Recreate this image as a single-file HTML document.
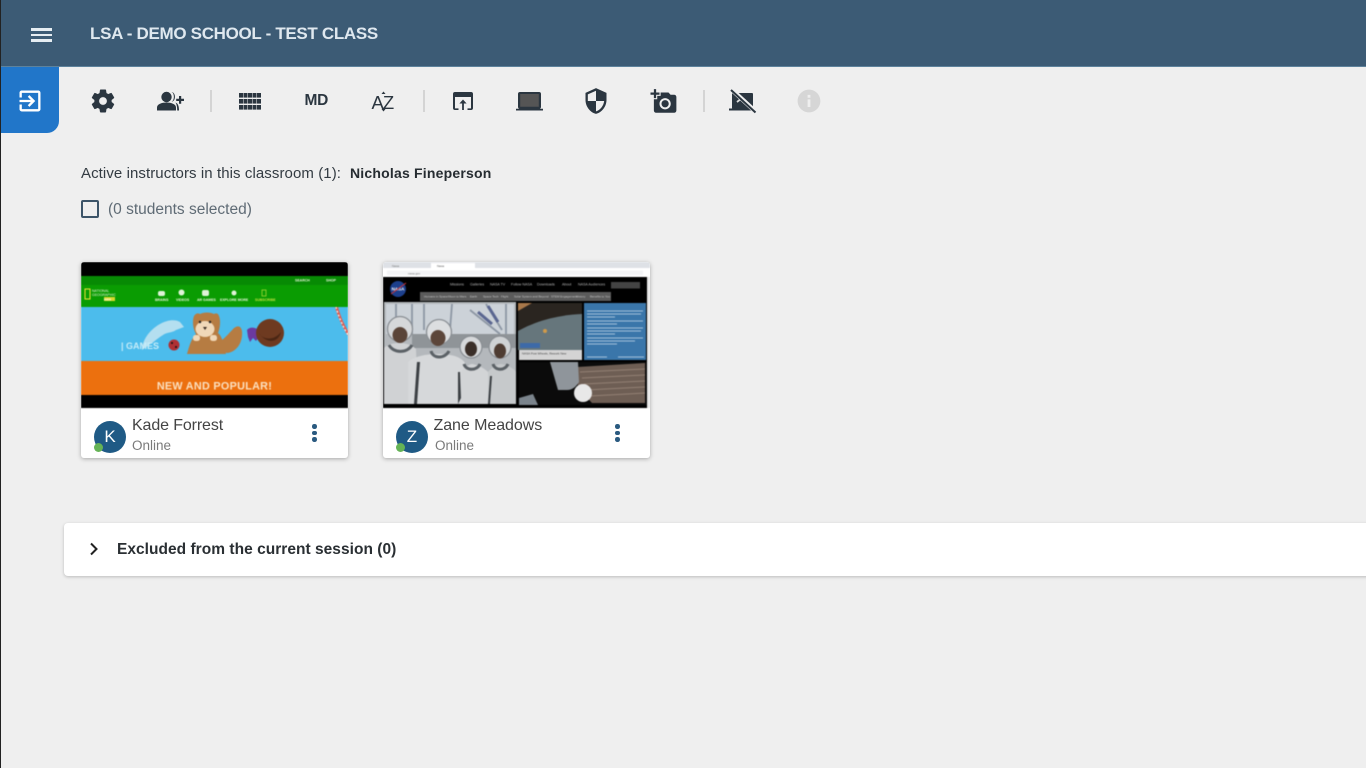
<!DOCTYPE html>
<html lang="en"><head><meta charset="utf-8"><title>LSA - Demo School</title>
<style>
*{box-sizing:border-box}
html,body{margin:0;padding:0;width:1366px;height:768px;overflow:hidden;background:#efefef;font-family:"Liberation Sans",sans-serif}
#w{position:absolute;left:0;top:0;width:1366px;height:768px;overflow:hidden;filter:blur(.35px)}
.a{position:absolute}
.t{position:absolute;white-space:nowrap;line-height:1}
#hdr{left:0;top:0;width:1366px;height:67px;background:#3c5b75;border-bottom:1px solid #5d829c}
.sep{position:absolute;width:2px;height:22px;top:90px;background:#d4d4d4}
.ic{position:absolute;fill:#2b3640}
.card{position:absolute;top:262px;width:267px;height:196px;background:#fff;border-radius:3px;box-shadow:0 1px 4px rgba(0,0,0,.3);overflow:hidden}
.th{position:absolute;left:0;top:0;filter:blur(.5px)}
.av{position:absolute;top:421px;width:32px;height:32px;border-radius:50%;background:#1f5a85;color:#fff;font-size:17px;line-height:31px;text-align:center}
.dot{position:absolute;top:443px;width:9px;height:9px;border-radius:50%;background:#65b356;}
.k{position:absolute;width:4.5px;height:4.5px;border-radius:50%;background:#2a5a80}
</style></head><body><div id="w">
<div class="a" style="left:0;top:0;width:1px;height:768px;background:#222;z-index:5"></div>
<div class="a" id="hdr"></div>
<div class="a" style="left:31px;top:28px;width:21px;height:2.5px;background:#e6edf2"></div>
<div class="a" style="left:31px;top:33.500px;width:21px;height:2.5px;background:#e6edf2"></div>
<div class="a" style="left:31px;top:39px;width:21px;height:2.5px;background:#e6edf2"></div>
<div class="t" style="left:90px;top:25px;font-size:17px;font-weight:bold;color:#dfe8ef;letter-spacing:-.32px">LSA - DEMO SCHOOL - TEST CLASS</div>

<div class="a" style="left:1px;top:67px;width:58px;height:66px;background:#2176c9;border-radius:0 0 12px 0"></div>
<svg class="a" style="left:16px;top:87px;fill:#fff" width="28" height="28" viewBox="0 0 24 24"><path d="M10.090 15.590L11.500 17l5-5-5-5-1.410 1.410L12.670 11H3v2h9.670l-2.580 2.590zM19 3H5c-1.110 0-2 .9-2 2v4h2V5h14v14H5v-4H3v4c0 1.100.89 2 2 2h14c1.100 0 2-.9 2-2V5c0-1.100-.9-2-2-2z"/></svg>

<svg class="ic" style="left:89px;top:87px" width="28" height="28" viewBox="0 0 24 24"><path stroke="#2b3640" stroke-width=".5" d="M19.140 12.940c.04-.3.06-.61.06-.94 0-.32-.02-.64-.07-.94l2.030-1.580c.18-.14.23-.41.12-.61l-1.920-3.320c-.12-.22-.37-.29-.59-.22l-2.390.96c-.5-.38-1.030-.7-1.620-.94l-.36-2.540c-.04-.24-.24-.41-.48-.41h-3.840c-.24 0-.43.17-.47.41l-.36 2.540c-.59.24-1.130.57-1.620.94l-2.390-.96c-.22-.08-.47 0-.59.22L2.740 8.870c-.12.21-.08.47.12.61l2.030 1.580c-.05.3-.09.63-.09.94s.02.64.07.94l-2.030 1.580c-.18.14-.23.41-.12.61l1.920 3.320c.12.22.37.29.59.22l2.390-.96c.5.38 1.030.7 1.620.94l.36 2.540c.05.24.24.41.48.41h3.840c.24 0 .44-.17.47-.41l.36-2.540c.59-.24 1.130-.56 1.620-.94l2.390.96c.22.08.47 0 .59-.22l1.920-3.320c.12-.22.07-.47-.12-.61l-2.010-1.580zM12 15.600c-1.980 0-3.600-1.620-3.600-3.600s1.620-3.600 3.600-3.600 3.600 1.620 3.600 3.600-1.620 3.600-3.600 3.600z"/></svg>

<svg class="ic" style="left:156px;top:91px" width="28" height="20" viewBox="0 0 28 20"><circle cx="10.500" cy="6" r="5.200"/><path d="M1 19.500v-3c0-3.400 5-5 9.500-5s9.500 1.600 9.500 5v3z"/><path d="M15.500 1c3.200 1 3.200 8.500 0 9.800 4.600-.3 4.600-9.500 0-9.800zM19.500 11.500c2.500 1 3.500 3.500 3.500 8h-1.800c0-3.500-.4-6-1.700-8z"/><path d="M23 5h2.200v2.800H28V10h-2.800v2.800H23V10h-2.800V7.800H23z"/></svg>
<div class="sep" style="left:210px"></div>

<svg class="ic" style="left:239px;top:93px" width="22" height="17" viewBox="0 0 22 17"><g fill="#2b3640"><rect x="0" y="0" width="4" height="4.600"/><rect x="4.500" y="0" width="4" height="4.600"/><rect x="9" y="0" width="4" height="4.600"/><rect x="13.500" y="0" width="4" height="4.600"/><rect x="18" y="0" width="4" height="4.600"/><rect x="0" y="6" width="4" height="4.600"/><rect x="4.500" y="6" width="4" height="4.600"/><rect x="9" y="6" width="4" height="4.600"/><rect x="13.500" y="6" width="4" height="4.600"/><rect x="18" y="6" width="4" height="4.600"/><rect x="0" y="12" width="4" height="4.600"/><rect x="4.500" y="12" width="4" height="4.600"/><rect x="9" y="12" width="4" height="4.600"/><rect x="13.500" y="12" width="4" height="4.600"/><rect x="18" y="12" width="4" height="4.600"/></g></svg>
<div class="t" style="left:304.500px;top:93px;font-size:15.500px;font-weight:bold;color:#2b3640;letter-spacing:-.3px">MD</div>
<div class="t" style="left:371.500px;top:94px;font-size:18.500px;color:#2b3640;letter-spacing:-1px">AZ</div>
<svg class="a" style="left:378px;top:88px" width="12" height="24" viewBox="0 0 12 24"><path d="M3.500 6L5.500 3.500 7.500 6zM3.500 21L5.500 23.500 7.500 21z" fill="#2b3640"/></svg>
<div class="sep" style="left:423px"></div>

<svg class="a" style="left:453px;top:92px" width="20" height="18" viewBox="0 0 20 18"><path fill="#2b3640" d="M2 0h16a2 2 0 0 1 2 2v14a2 2 0 0 1-2 2h-3.500v-1.600H18V5H2v11.400h3.500V18H2a2 2 0 0 1-2-2V2a2 2 0 0 1 2-2z"/><path fill="#2b3640" d="M10 7.500l3.600 4h-2.700V18H9.100v-6.500H6.400z"/></svg>
<svg class="a" style="left:516px;top:90px" width="27" height="21" viewBox="0 0 27 21"><path fill="#555" d="M4 4h19v13H4z"/><path fill="#2b3640" d="M4 2h19a2 2 0 0 1 2 2v13a2 2 0 0 1-1 1.700H27V20.500H0V18.700h3A2 2 0 0 1 2 17V4a2 2 0 0 1 2-2zm.2 2v12.800h18.600V4z"/></svg>
<svg class="ic" style="left:582px;top:87px" width="28" height="28" viewBox="0 0 24 24"><path d="M12 1L3 5v6c0 5.550 3.840 10.740 9 12 5.160-1.260 9-6.450 9-12V5l-9-4zm0 10.990h7c-.53 4.120-3.280 7.790-7 8.940V12H5V6.300l7-3.110v8.800z"/></svg>
<svg class="ic" style="left:649.500px;top:88px" width="28" height="27" viewBox="0 0 24 24"><path d="M3 4V1h2v3h3v2H5v3H3V6H0V4h3zm3 6V7h3V4h7l1.830 2H21c1.100 0 2 .9 2 2v12c0 1.100-.9 2-2 2H5c-1.100 0-2-.9-2-2V10h3zm7 9c2.760 0 5-2.240 5-5s-2.240-5-5-5-5 2.240-5 5 2.240 5 5 5zm-3.200-5c0 1.770 1.430 3.200 3.200 3.200s3.200-1.430 3.200-3.200-1.430-3.200-3.200-3.200-3.200 1.430-3.200 3.200z"/></svg>
<div class="sep" style="left:703px"></div>

<svg class="a" style="left:728px;top:88px" width="29" height="26" viewBox="0 0 29 26"><rect x="4" y="5" width="21" height="16" rx="1" fill="#2b3640"/><rect x="1" y="20.500" width="26" height="2" fill="#2b3640"/><path d="M9 14l5-4 4 3" stroke="#ddd" stroke-width="1.800" fill="none"/><path d="M3 1L28 24" stroke="#efefef" stroke-width="4.500"/><path d="M3 2L27.500 24.500" stroke="#2b3640" stroke-width="2"/></svg>
<svg class="a" style="left:796px;top:88px;fill:#d6d6d6" width="26" height="26" viewBox="0 0 24 24"><path d="M12 1.500C6.200 1.500 1.500 6.200 1.500 12S6.200 22.500 12 22.500 22.500 17.800 22.500 12 17.800 1.500 12 1.500zm1.300 16h-2.600v-7h2.600v7zm0-8.500h-2.600V6.400h2.600V9z"/></svg>

<div class="t" style="left:81px;top:166px;font-size:15px;color:#333b42;letter-spacing:.08px">Active instructors in this classroom (1):</div>
<div class="t" style="left:350px;top:166px;font-size:14px;font-weight:bold;color:#262c31;letter-spacing:.2px">Nicholas Fineperson</div>
<div class="a" style="left:81px;top:200px;width:18px;height:18px;border:2px solid #3c5468;border-radius:2px"></div>
<div class="t" style="left:108px;top:202px;font-size:15.500px;color:#5f6b75;letter-spacing:0">(0 students selected)</div>

<div class="card" style="left:81px">
<svg class="th" width="267" height="146" viewBox="81 262 267 146">
<rect x="81" y="262" width="267" height="146" fill="#000"/>
<rect x="81" y="276" width="267" height="31" fill="#0a9c02"/>
<rect x="81" y="276" width="267" height="9" fill="#078a04"/>
<rect x="81" y="307" width="267" height="54" fill="#4cbcec"/>
<rect x="81" y="361" width="267" height="34" fill="#ec700e"/>
<rect x="85" y="289" width="5" height="10" fill="none" stroke="#f2e23c" stroke-width="1"/>
<rect x="104" y="297" width="11" height="4" fill="#d8d82c"/>
<text x="92" y="292" font-size="3.500" fill="#e6f4d8" font-family="Liberation Sans">NATIONAL</text>
<text x="92" y="296" font-size="3.500" fill="#e6f4d8" font-family="Liberation Sans">GEOGRAPHIC</text>
<text x="104" y="300.500" font-size="3" font-weight="bold" fill="#fff" font-family="Liberation Sans">KIDS</text>
<g fill="#dff3d8"><rect x="158" y="291" width="7" height="5" rx="2"/><circle cx="181.500" cy="292.500" r="3"/><rect x="202" y="290" width="7" height="6" rx="2"/><circle cx="234" cy="293" r="2.500"/></g>
<rect x="262" y="290" width="4" height="6" fill="none" stroke="#b8e03c" stroke-width=".7"/>
<g font-family="Liberation Sans" font-size="3.500" font-weight="bold" fill="#e6f4d8"><text x="155" y="301">BRAINS</text><text x="176" y="301">VIDEOS</text><text x="197" y="301">AR GAMES</text><text x="220" y="301">EXPLORE MORE</text><text x="255" y="301" fill="#c4e040">SUBSCRIBE</text><text x="295" y="281.500">SEARCH</text><text x="326" y="281.500">SHOP</text></g>
<path d="M335 307c2 8 7 20 13 29v-5c-4-7-8-16-10-24z" fill="#e05a50"/>
<path d="M336 307c2 8 7 20 12 28" stroke="#f2e8e0" stroke-width="1.300" stroke-dasharray="2 2" fill="none"/>
<path d="M142 350c0-9 7-20 18-26 7-4 15-5 20-2l4 5-8 3c-4 3-9 2-13 5-5 3-8 6-11 8-3 2-7 5-10 7z" fill="#b4dff0"/>
<text x="121" y="349" font-family="Liberation Sans" font-size="9" font-weight="bold" fill="#c6ecf8">| GAMES</text>
<circle cx="174" cy="345" r="5.500" fill="#b03034"/>
<circle cx="172" cy="343" r="1" fill="#111"/><circle cx="176" cy="347" r="1" fill="#111"/>
<path d="M218 352l4-12c5-4 9-9 12-12 4-3 7-2 8 3 1 10-4 20-14 22z" fill="#b67c42"/>
<path d="M187 354c2-7 4-15 9-20-3-5-4-13-2-18 2-3 4-3 6-2 4-2 10-2 14 0 2-1 4-1 5 2 2 5 1 12-1 17 5 4 6 14 8 21z" fill="#b67c42"/>
<ellipse cx="205" cy="329" rx="9.500" ry="8" fill="#f0d8b8"/>
<path d="M203 327h4l-2 3z" fill="#3a2a20"/><rect x="193" y="335" width="7" height="6" rx="2.500" fill="#f0d8b8"/><rect x="210" y="335" width="7" height="6" rx="2.500" fill="#f0d8b8"/>
<circle cx="200" cy="322" r="1.200" fill="#222"/><circle cx="210" cy="322" r="1.200" fill="#222"/>
<path d="M247 330c2-3 7-3 10-1 3 3 2 9-1 12l-3-3-3 4-2-5z" fill="#6b3aa0"/>
<circle cx="270" cy="333" r="14" fill="#6e3a20"/>
<path d="M259 333c3 6 14 9 22-1-2 10-14 13-22 1z" fill="#4a2614"/>
<text x="214.500" y="389.500" text-anchor="middle" font-family="Liberation Sans" font-size="10.800" font-weight="bold" fill="#fbe0c0" letter-spacing=".3">NEW AND POPULAR!</text>
</svg>
</div>

<div class="card" style="left:383px">
<svg class="th" width="267" height="146" viewBox="383 262 267 146">
<rect x="383" y="262" width="267" height="146" fill="#000"/>
<rect x="383" y="262" width="267" height="6" fill="#dee1e6"/>
<rect x="431" y="263" width="44" height="5" fill="#fff"/>
<rect x="383" y="268" width="267" height="9" fill="#fff"/>
<rect x="387" y="270.500" width="256" height="4.500" fill="#f3f4f6"/>
<text x="392" y="267" font-size="3" fill="#777" font-family="Liberation Sans">Nasa</text>
<text x="437" y="267" font-size="3" fill="#555" font-family="Liberation Sans">Nasa</text>
<text x="408" y="274.500" font-size="3" fill="#777" font-family="Liberation Sans">nasa.gov</text>
<rect x="647" y="277" width="3" height="131" fill="#e8e8e8"/>
<circle cx="398" cy="289" r="8" fill="#1c3f8c"/>
<text x="398" y="290.500" text-anchor="middle" font-size="4.500" font-weight="bold" fill="#fff" font-family="Liberation Sans">NASA</text>
<path d="M391 294L406 283" stroke="#c33" stroke-width="1"/>
<g font-family="Liberation Sans" font-size="3.600" fill="#b4b4b4"><text x="450" y="285.500">Missions</text><text x="470" y="285.500">Galleries</text><text x="490" y="285.500">NASA TV</text><text x="511" y="285.500">Follow NASA</text><text x="537" y="285.500">Downloads</text><text x="562" y="285.500">About</text><text x="578" y="285.500">NASA Audiences</text></g>
<rect x="611" y="282" width="29" height="6.500" fill="#444"/>
<rect x="420" y="292" width="191" height="9" fill="#5b5b5b"/>
<g font-family="Liberation Sans" font-size="3" fill="#c4c4c4"><text x="424" y="297.500">Humans in Space</text><text x="448" y="297.500">Moon to Mars</text><text x="470" y="297.500">Earth</text><text x="483" y="297.500">Space Tech</text><text x="501" y="297.500">Flight</text><text x="514" y="297.500">Solar System and Beyond</text><text x="551" y="297.500">STEM Engagement</text><text x="576" y="297.500">History</text><text x="590" y="297.500">Benefits to You</text></g>

<rect x="384" y="302" width="132" height="102" fill="#b4b8bc"/>
<rect x="386" y="304" width="128" height="30" fill="#ccd2d8"/>
<path d="M396 304v24M412 304v30M424 304v26M452 304l-2 26M470 310l30 24M486 304l16 26M506 304v32" stroke="#8d97a4" stroke-width="1.800" fill="none"/>
<path d="M478 312l14 12M488 306l10 16" stroke="#5a6690" stroke-width="3" fill="none"/>
<path d="M412 334h104v14H412z" fill="#8f9498"/>
<!-- suits -->
<path d="M384 348c3-3 8-5 15-5s13 2 17 6l2 55H384z" fill="#d0d2d4"/>
<path d="M408 362c4-4 14-8 30-8s24 4 27 9l-3 41H408z" fill="#d6d8da"/>
<path d="M461 372c3-5 9-8 11-8s12 3 17 9l3 31h-31z" fill="#d2d4d6"/>
<path d="M488 372c4-5 10-8 13-8s13 4 15 8v32h-28z" fill="#c6c9cb"/>
<g fill="#3c4044"><path d="M417 362l3 0-3 42h-3z"/><path d="M458 372l2 0 1 26-3 6z"/><path d="M490 376l2 0-2 28h-2z"/></g>
<g fill="none" stroke="#5b6166" stroke-width="3"><path d="M389 345c4 8 18 9 23 0"/><path d="M431 351c2 8 14 8 18 0"/><path d="M464 364c2 7 13 7 16 0"/><path d="M493 364c2 7 12 7 15 0"/></g>
<g stroke="#8a8f94" stroke-width="1.300"><circle cx="400" cy="329" r="12.500" fill="#d6d8da"/><circle cx="439" cy="332" r="12.500" fill="#dcdee0"/><circle cx="471" cy="347" r="11" fill="#d6d8da"/><circle cx="500" cy="347" r="11" fill="#cfd2d4"/></g>
<ellipse cx="400" cy="335" rx="7.500" ry="8" fill="#5a4438"/><ellipse cx="438" cy="338" rx="7.500" ry="8" fill="#5c463a"/><ellipse cx="471" cy="349" rx="6" ry="7.500" fill="#3a2e28"/><ellipse cx="500" cy="351" rx="6" ry="7.500" fill="#4e3c32"/>

<rect x="518" y="303" width="64" height="47" fill="#2a2520"/>
<path d="M518 331c16-9 38-16 64-17v36h-64z" fill="#66767c"/>
<path d="M518 303h14l-14 8z" fill="#a8784a"/>
<circle cx="545" cy="331" r="2" fill="#d09a4a"/>
<rect x="520" y="343" width="20" height="5" fill="#3d6aa8"/>
<rect x="519" y="350" width="63" height="10" fill="#d4d4d4"/>
<text x="522" y="354.500" font-size="3" fill="#444" font-family="Liberation Sans">NASA Post Wheels, Rework New</text>
<rect x="584" y="303" width="62" height="57" fill="#3a76aa"/>
<g stroke="#cfe0ee" stroke-width="1.100" opacity=".7"><path d="M587 311h56M587 314h54M587 317h28M587 321h56M587 324h30M587 328h56M587 331h54M587 334h28M587 338h56M587 341h48M587 344h30M587 357h20M618 357h26"/></g>
<rect x="519" y="362" width="128" height="43" fill="#0b0b0b"/>
<path d="M577 367l68-4v40h-53l-14-15z" fill="#6e5e54"/>
<path d="M580 372l65-3M582 378l63-3M584 384l61-3M586 390l59-3M590 396l55-3" stroke="#938074" stroke-width="1" fill="none"/>
<path d="M550 362h28l1 20c-3 5-7 8-12 8h-9z" fill="#8f959b"/>
<circle cx="583" cy="393" r="9" fill="#e8e8e8"/>
<path d="M519 398l14-4 5 11h-19z" fill="#7b848c"/>
</svg>
</div>

<div class="av" style="left:94px">K</div><div class="dot" style="left:94px"></div>
<div class="t" style="left:132px;top:418px;font-size:16px;color:#444;letter-spacing:-.12px">Kade Forrest</div>
<div class="t" style="left:132px;top:438.500px;font-size:13.500px;color:#7a7a7a">Online</div>
<div class="k" style="left:312px;top:424px"></div><div class="k" style="left:312px;top:430.500px"></div><div class="k" style="left:312px;top:437px"></div>

<div class="av" style="left:396px">Z</div><div class="dot" style="left:396px"></div>
<div class="t" style="left:433.500px;top:418px;font-size:16px;color:#444;letter-spacing:-.06px">Zane Meadows</div>
<div class="t" style="left:435px;top:438.500px;font-size:13.500px;color:#7a7a7a">Online</div>
<div class="k" style="left:615px;top:424px"></div><div class="k" style="left:615px;top:430.500px"></div><div class="k" style="left:615px;top:437px"></div>

<div class="a" style="left:64px;top:523px;width:1310px;height:53px;background:#fff;border-radius:4px;box-shadow:0 1px 3px rgba(0,0,0,.22)"></div>
<svg class="a" style="left:88px;top:542px" width="12" height="14" viewBox="0 0 12 14"><path d="M3 1.500L8.500 7 3 12.500" fill="none" stroke="#222" stroke-width="2"/></svg>
<div class="t" style="left:117px;top:542px;font-size:15.500px;font-weight:bold;color:#2a2f33;letter-spacing:.03px">Excluded from the current session (0)</div>
</div></body></html>
